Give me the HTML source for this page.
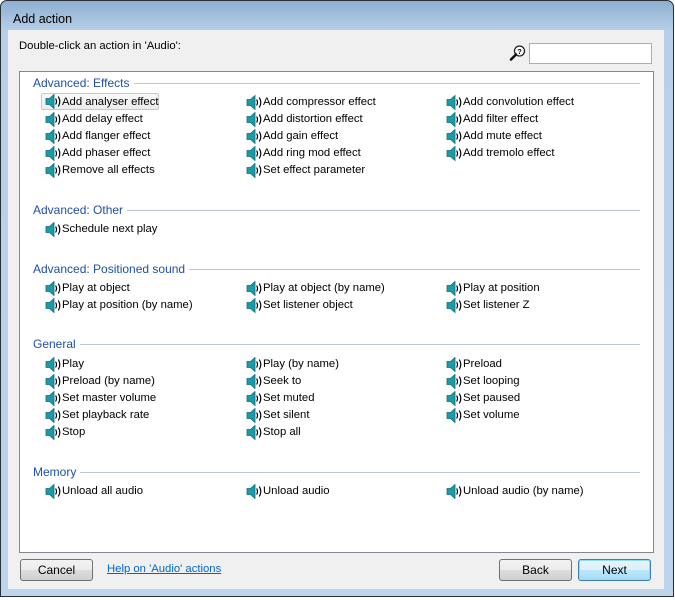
<!DOCTYPE html>
<html><head><meta charset="utf-8"><style>
*{margin:0;padding:0;box-sizing:border-box}
body{width:675px;height:600px;background:#fff;font-family:"Liberation Sans",Tahoma,sans-serif;font-size:11.3px;color:#000;position:relative;overflow:hidden}
.win{position:absolute;left:0;top:0;width:674px;height:597px;border:1px solid #2a2f36;border-radius:7px 7px 0 0;background:linear-gradient(#8eafd0 0,#b7cfe8 30px,#bcd4ec 100%)}
.title{position:absolute;left:12px;top:11px;font-size:12.5px;color:#000}
.content{position:absolute;left:8px;top:30px;width:656px;height:559px;background:#f0f0f0}
.a{position:absolute;white-space:nowrap}
.list{position:absolute;left:19px;top:71px;width:635px;height:482px;background:#fff;border:1px solid #828790}
.h{position:absolute;color:#1f4fa6;font-size:12px;white-space:nowrap;background:#fff;padding-right:4px}
.hl{position:absolute;height:1px;background:#b9c6e0}
.it{position:absolute;white-space:nowrap;padding-left:17px;height:16px;line-height:15px}
.it svg{position:absolute;left:0;top:0px}
.sel{border:1px solid #c8c8c8;border-radius:2px;background:linear-gradient(#fafafa,#ececec)}
.btn{position:absolute;height:22px;border:1px solid #707070;border-radius:3px;background:linear-gradient(#f2f2f2 0,#ebebeb 50%,#dddddd 51%,#cfcfcf 100%);text-align:center;line-height:20px;font-size:12px}
.next{border-color:#3c7fb1;background:linear-gradient(#eaf6fd 0,#d9f0fc 50%,#bee6fd 51%,#a7d9f5 100%);box-shadow:inset 0 0 0 1px #8fdcf8}
</style></head><body>
<svg width="0" height="0" style="position:absolute"><defs>
<symbol id="sp" viewBox="0 0 17 15"><path d="M1 4.5h3.5l4.5-4v14l-4.5-4H1z" fill="#1b9aa8" stroke="#0e6d7a" stroke-width=".8"/><path d="M10.6 4.5q1.8 3 0 6M13.3 2.5q3 5 0 10" fill="none" stroke="#000" stroke-width="1.2"/></symbol>
</defs></svg>
<div class="win"><div class="title">Add action</div></div>
<div class="content"></div>
<div class="a" style="left:19px;top:40px">Double-click an action in 'Audio':</div>
<svg class="a" style="left:509px;top:44px" width="18" height="18" viewBox="0 0 18 18"><circle cx="10.5" cy="7" r="5" fill="#fff" stroke="#222" stroke-width="1.3"/><path d="M7 10.5L2 15.5" stroke="#111" stroke-width="2.6" stroke-linecap="round"/><text x="10.5" y="10" font-size="7.5" text-anchor="middle" font-family="Liberation Sans" font-weight="bold">?</text></svg>
<div class="a" style="left:529px;top:43px;width:123px;height:21px;background:#fff;border:1px solid #abadb3"></div>
<div class="list"></div>

<div class="hl" style="left:33px;top:83px;width:607px"></div><div class="h" style="left:33px;top:76px">Advanced: Effects</div>
<div class="it sel" style="left:41px;top:93px;width:118px;height:17px;padding-left:20px;line-height:16px"><svg width="17" height="15" style="left:3px;top:0"><use href="#sp"/></svg>Add analyser effect</div>
<div class="it" style="left:246px;top:95px"><svg width="17" height="15"><use href="#sp"/></svg>Add compressor effect</div>
<div class="it" style="left:446px;top:95px"><svg width="17" height="15"><use href="#sp"/></svg>Add convolution effect</div>
<div class="it" style="left:45px;top:112px"><svg width="17" height="15"><use href="#sp"/></svg>Add delay effect</div>
<div class="it" style="left:246px;top:112px"><svg width="17" height="15"><use href="#sp"/></svg>Add distortion effect</div>
<div class="it" style="left:446px;top:112px"><svg width="17" height="15"><use href="#sp"/></svg>Add filter effect</div>
<div class="it" style="left:45px;top:129px"><svg width="17" height="15"><use href="#sp"/></svg>Add flanger effect</div>
<div class="it" style="left:246px;top:129px"><svg width="17" height="15"><use href="#sp"/></svg>Add gain effect</div>
<div class="it" style="left:446px;top:129px"><svg width="17" height="15"><use href="#sp"/></svg>Add mute effect</div>
<div class="it" style="left:45px;top:146px"><svg width="17" height="15"><use href="#sp"/></svg>Add phaser effect</div>
<div class="it" style="left:246px;top:146px"><svg width="17" height="15"><use href="#sp"/></svg>Add ring mod effect</div>
<div class="it" style="left:446px;top:146px"><svg width="17" height="15"><use href="#sp"/></svg>Add tremolo effect</div>
<div class="it" style="left:45px;top:163px"><svg width="17" height="15"><use href="#sp"/></svg>Remove all effects</div>
<div class="it" style="left:246px;top:163px"><svg width="17" height="15"><use href="#sp"/></svg>Set effect parameter</div>

<div class="hl" style="left:33px;top:210px;width:607px"></div><div class="h" style="left:33px;top:203px">Advanced: Other</div>
<div class="it" style="left:45px;top:222px"><svg width="17" height="15"><use href="#sp"/></svg>Schedule next play</div>

<div class="hl" style="left:33px;top:269px;width:607px"></div><div class="h" style="left:33px;top:262px">Advanced: Positioned sound</div>
<div class="it" style="left:45px;top:281px"><svg width="17" height="15"><use href="#sp"/></svg>Play at object</div>
<div class="it" style="left:246px;top:281px"><svg width="17" height="15"><use href="#sp"/></svg>Play at object (by name)</div>
<div class="it" style="left:446px;top:281px"><svg width="17" height="15"><use href="#sp"/></svg>Play at position</div>
<div class="it" style="left:45px;top:298px"><svg width="17" height="15"><use href="#sp"/></svg>Play at position (by name)</div>
<div class="it" style="left:246px;top:298px"><svg width="17" height="15"><use href="#sp"/></svg>Set listener object</div>
<div class="it" style="left:446px;top:298px"><svg width="17" height="15"><use href="#sp"/></svg>Set listener Z</div>

<div class="hl" style="left:33px;top:344px;width:607px"></div><div class="h" style="left:33px;top:337px">General</div>
<div class="it" style="left:45px;top:357px"><svg width="17" height="15"><use href="#sp"/></svg>Play</div>
<div class="it" style="left:246px;top:357px"><svg width="17" height="15"><use href="#sp"/></svg>Play (by name)</div>
<div class="it" style="left:446px;top:357px"><svg width="17" height="15"><use href="#sp"/></svg>Preload</div>
<div class="it" style="left:45px;top:374px"><svg width="17" height="15"><use href="#sp"/></svg>Preload (by name)</div>
<div class="it" style="left:246px;top:374px"><svg width="17" height="15"><use href="#sp"/></svg>Seek to</div>
<div class="it" style="left:446px;top:374px"><svg width="17" height="15"><use href="#sp"/></svg>Set looping</div>
<div class="it" style="left:45px;top:391px"><svg width="17" height="15"><use href="#sp"/></svg>Set master volume</div>
<div class="it" style="left:246px;top:391px"><svg width="17" height="15"><use href="#sp"/></svg>Set muted</div>
<div class="it" style="left:446px;top:391px"><svg width="17" height="15"><use href="#sp"/></svg>Set paused</div>
<div class="it" style="left:45px;top:408px"><svg width="17" height="15"><use href="#sp"/></svg>Set playback rate</div>
<div class="it" style="left:246px;top:408px"><svg width="17" height="15"><use href="#sp"/></svg>Set silent</div>
<div class="it" style="left:446px;top:408px"><svg width="17" height="15"><use href="#sp"/></svg>Set volume</div>
<div class="it" style="left:45px;top:425px"><svg width="17" height="15"><use href="#sp"/></svg>Stop</div>
<div class="it" style="left:246px;top:425px"><svg width="17" height="15"><use href="#sp"/></svg>Stop all</div>

<div class="hl" style="left:33px;top:472px;width:607px"></div><div class="h" style="left:33px;top:465px">Memory</div>
<div class="it" style="left:45px;top:484px"><svg width="17" height="15"><use href="#sp"/></svg>Unload all audio</div>
<div class="it" style="left:246px;top:484px"><svg width="17" height="15"><use href="#sp"/></svg>Unload audio</div>
<div class="it" style="left:446px;top:484px"><svg width="17" height="15"><use href="#sp"/></svg>Unload audio (by name)</div>

<div class="btn" style="left:20px;top:559px;width:73px">Cancel</div>
<div class="a" style="left:107px;top:563px;color:#0066cc;text-decoration:underline">Help on 'Audio' actions</div>
<div class="btn" style="left:499px;top:559px;width:73px">Back</div>
<div class="btn next" style="left:578px;top:559px;width:73px">Next</div>
</body></html>
